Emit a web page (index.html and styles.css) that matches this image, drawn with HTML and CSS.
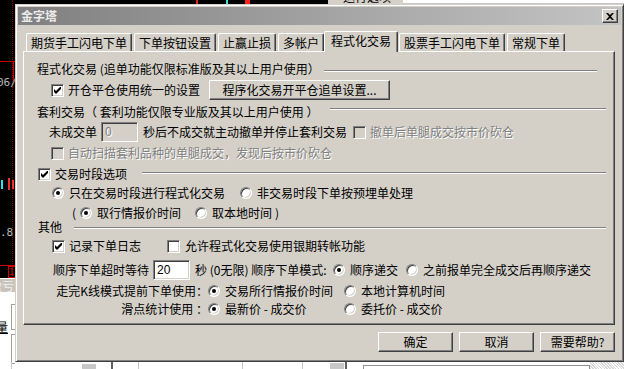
FILE: index.html
```html
<!DOCTYPE html>
<html>
<head>
<meta charset="utf-8">
<link rel="stylesheet" href="styles.css">
</head>
<body>
<div class="bg">
  <div class="bg-top-black"><i class="mk mk-r1"></i><i class="mk mk-c1"></i><i class="mk mk-r2"></i></div>
  <div class="bg-top-tab"><span>运行选项</span></div>
  <div class="bg-top-white"></div>
  <div class="bg-left">
    <i class="dots"></i>
    <i class="redline rl1"></i>
    <i class="redv"></i>
    <span class="lt t06">06/</span>
    <i class="bar cy"></i><i class="bar rd"></i><i class="bar rd2"></i>
    <span class="lt t8">.8</span>
    <i class="redline rl2"></i>
    <span class="rbox">1</span>
  </div>
  <div class="bg-left-gray"><span>盈亏</span></div>
  <div class="bg-left-white"><i class="lbox b1"></i><i class="lbox b2"></i><span class="liang">量</span></div>
  <div class="bg-bottom">
    <i class="gl g1"></i><i class="gblk"></i><i class="dl d1"></i><i class="gl g2"></i><i class="gl g3"></i><i class="gl g4"></i><i class="gblk2"></i><i class="dl d2"></i><i class="bbox"></i><i class="checker"></i>
  </div>
</div>

<div class="dialog">
  <div class="titlebar">
    <span class="title">金字塔</span>
    <span class="close"><svg width="8" height="7" viewBox="0 0 8 7"><path d="M0 0h2l2 2 2-2h2L5 3.5 8 7H6L4 5 2 7H0l3-3.5z" fill="#000"/></svg></span>
  </div>
  <div class="body">
    <div class="tabs">
      <div class="tab">期货手工闪电下单</div>
      <div class="tab">下单按钮设置</div>
      <div class="tab">止赢止损</div>
      <div class="tab">多帐户</div>
      <div class="tab sel">程式化交易</div>
      <div class="tab">股票手工闪电下单</div>
      <div class="tab">常规下单</div>
    </div>
    <div class="panel">
      <div class="row r1"><span>程式化交易 (追单功能仅限标准版及其以上用户使用）</span><i class="etch e1"></i></div>
      <div class="row r2">
        <span class="cb on"><svg width="7" height="7" viewBox="0 0 7 7"><path d="M0 2l2 2 5-5v3L2 7 0 5z" fill="#000"/></svg></span>
        <span class="lab w-r2">开仓平仓使用统一的设置</span>
        <span class="btn bigbtn">程序化交易开平仓追单设置...</span>
      </div>
      <div class="row r3"><span>套利交易（ 套利功能仅限专业版及其以上用户使用 ）</span><i class="etch e2"></i></div>
      <div class="row r4">
        <span class="w-r4a">未成交单</span>
        <span class="field dis">0</span>
        <span class="w-r4b">秒后不成交就主动撤单并停止套利交易</span>
        <span class="cb dis"></span>
        <span class="lab distext">撤单后单腿成交按市价砍仓</span>
      </div>
      <div class="row r5">
        <span class="cb dis"></span>
        <span class="lab distext">自动扫描套利品种的单腿成交，发现后按市价砍仓</span>
      </div>
      <div class="row r6">
        <span class="cb on"><svg width="7" height="7" viewBox="0 0 7 7"><path d="M0 2l2 2 5-5v3L2 7 0 5z" fill="#000"/></svg></span>
        <span class="lab l6">交易时段选项</span><i class="etch e3"></i>
      </div>
      <div class="row r7">
        <span class="opt w-r7"><span class="rb on"></span><span>只在交易时段进行程式化交易</span></span>
        <span class="opt"><span class="rb"></span><span>非交易时段下单按预埋单处理</span></span>
      </div>
      <div class="row r8">
        <span class="paren">(</span>
        <span class="opt w-r8"><span class="rb on"></span><span>取行情报价时间</span></span>
        <span class="opt w-r8b"><span class="rb"></span><span>取本地时间</span></span>
        <span>)</span>
      </div>
      <div class="row r9"><span>其他</span><i class="etch e4"></i></div>
      <div class="row r10">
        <span class="opt w-r10"><span class="cb on"><svg width="7" height="7" viewBox="0 0 7 7"><path d="M0 2l2 2 5-5v3L2 7 0 5z" fill="#000"/></svg></span><span>记录下单日志</span></span>
        <span class="opt"><span class="cb"></span><span>允许程式化交易使用银期转帐功能</span></span>
      </div>
      <div class="row r11">
        <span class="w-r11a">顺序下单超时等待</span>
        <span class="field">20</span>
        <span class="w-r11b">秒 (0无限) 顺序下单模式:</span>
        <span class="opt w-r11c"><span class="rb on"></span><span>顺序递交</span></span>
        <span class="opt"><span class="rb"></span><span>之前报单完全成交后再顺序递交</span></span>
      </div>
      <div class="row r12">
        <span class="klab">走完K线模式提前下单使用：</span>
        <span class="opt w-col"><span class="rb on"></span><span>交易所行情报价时间</span></span>
        <span class="opt"><span class="rb"></span><span>本地计算机时间</span></span>
      </div>
      <div class="row r13">
        <span class="klab">滑点统计使用 ：</span>
        <span class="opt w-col"><span class="rb on"></span><span>最新价 - 成交价</span></span>
        <span class="opt"><span class="rb"></span><span>委托价 - 成交价</span></span>
      </div>
    </div>
    <div class="buttons">
      <span class="btn fbtn">确定</span>
      <span class="btn fbtn">取消</span>
      <span class="btn fbtn">需要帮助?</span>
    </div>
  </div>
</div>
</body>
</html>
```

FILE: styles.css
```css
html, body {
  margin: 0;
  padding: 0;
}
body {
  width: 624px;
  height: 369px;
  overflow: hidden;
  position: relative;
  background: #fff;
  font-family: "Noto Sans CJK SC", "Noto Sans", sans-serif;
  font-size: 12px;
  line-height: 14px;
  color: #000;
}

/* ---------- background application (behind the dialog) ---------- */
.bg { position: absolute; left: 0; top: 0; width: 624px; height: 369px; }
.bg i, .bg span { position: absolute; display: block; }
.bg-top-black { position: absolute; left: 0; top: 0; width: 328px; height: 4px; background: #000; }
.mk { top: 0; height: 4px; width: 2px; }
.mk-r1 { left: 196px; background: #e02020; }
.mk-c1 { left: 226px; background: #40e0e0; }
.mk-r2 { left: 245px; width: 5px; background: #ff2020; }
.bg-top-tab { position: absolute; left: 328px; top: 0; width: 75px; height: 4px; background: #d4d0c8; overflow: hidden; }
.bg-top-tab span { left: 15px; top: -10px; white-space: nowrap; color: #000; }
.bg-top-white { position: absolute; left: 403px; top: 0; width: 221px; height: 3px; background: #fff; border-bottom: 1px solid #c8c8c8; }

.bg-left { position: absolute; left: 0; top: 0; width: 15px; height: 278px; background: #000; overflow: hidden; }
.dots { left: 12px; top: 0; height: 278px; border-left: 1px dotted #900000; }
.redline { left: 0; width: 15px; height: 1px; background: #d00000; }
.rl1 { top: 61px; }
.rl2 { top: 265px; }
.redv { left: 13px; top: 61px; width: 1px; height: 20px; background: #d00000; }
.lt { color: #b8b8b8; font-family: "DejaVu Sans Mono", monospace; font-size: 11px; line-height: 12px; white-space: nowrap; }
.t06 { left: -3px; top: 77px; }
.t8 { left: 0; top: 227px; }
.bar { width: 2px; }
.cy { left: 1px; top: 180px; height: 9px; background: #30e0f0; }
.rd { left: 8px; top: 178px; height: 12px; background: #f03030; }
.rd2 { left: 12px; top: 180px; height: 9px; background: #f03030; }
.rbox { left: 8px; top: 266px; width: 6px; height: 10px; border: 1px solid #d00000; color: #d00000; font-size: 9px; line-height: 10px; }
.bg-left-gray { position: absolute; left: 0; top: 279px; width: 15px; height: 13px; background: #c8c4bc; overflow: hidden; }
.bg-left-gray span { left: -10px; top: 0; line-height: 13px; color: #f0f0f0; white-space: nowrap; }
.bg-left-white { position: absolute; left: 0; top: 292px; width: 15px; height: 77px; background: #fff; }
.lbox { left: 11px; width: 4px; border: 1px solid #a0a0a0; border-right: none; }
.b1 { top: 12px; height: 24px; }
.b2 { top: 42px; height: 28px; }
.liang { left: -4px; top: 28px; font-size: 12px; text-decoration: underline; }

.bg-bottom { position: absolute; left: 15px; top: 362px; width: 609px; height: 7px; background: #fff; }
.gl { top: 0; height: 7px; width: 1px; background: #c8c8c8; }
.g1 { left: -4px; }
.gblk { left: 67px; top: 2px; width: 14px; height: 5px; background: #c8c8c8; }
.dl { top: 0; height: 7px; width: 2px; background: #606060; }
.d1 { left: 96px; }
.g2 { left: 123px; }
.g3 { left: 227px; }
.g4 { left: 287px; }
.gblk2 { left: 315px; top: 1px; width: 14px; height: 6px; background: #c8c8c8; }
.d2 { left: 330px; }
.bbox { left: 348px; top: 3px; width: 225px; height: 4px; border: 1px solid #909090; border-bottom: none; }
.checker { left: 575px; top: 0; width: 34px; height: 7px; background: repeating-linear-gradient(45deg, #d8d8d8 0 1px, #fff 1px 2px); }

/* ---------- dialog ---------- */
.dialog {
  position: absolute;
  left: 15px;
  top: 4px;
  width: 609px;
  height: 358px;
  box-sizing: border-box;
  background: #d4d0c8;
  border: 1px solid;
  border-color: #d4d0c8 #404040 #404040 #d4d0c8;
  box-shadow: inset 1px 1px #fff, inset -1px -1px #808080;
  padding: 2px;
  display: flex;
  flex-direction: column;
}
.titlebar {
  height: 18px;
  flex: none;
  background: linear-gradient(to right, #808080, #c4c4c4);
  display: flex;
  align-items: center;
  justify-content: space-between;
  padding: 0 3px 0 3px;
}
.title {
  color: #ececec;
  font-weight: bold;
  font-size: 12px;
}
.close {
  width: 16px;
  height: 14px;
  box-sizing: border-box;
  background: #d4d0c8;
  border: 1px solid;
  border-color: #fff #404040 #404040 #fff;
  box-shadow: inset -1px -1px #808080;
  display: flex;
  align-items: center;
  justify-content: center;
  padding-right: 1px;
}
.close svg { display: block; }

.body {
  flex: 1;
  padding: 6px 6px 0 5px;
  display: flex;
  flex-direction: column;
}
.tabs {
  height: 20px;
  display: flex;
  align-items: flex-end;
  padding-left: 3px;
  flex: none;
}
.tab {
  height: 18px;
  box-sizing: border-box;
  padding: 1px 4px 0 4px;
  border-top: 1px solid #fff;
  border-left: 1px solid #fff;
  border-right: 1px solid #404040;
  box-shadow: inset -1px 0 #808080;
  border-radius: 2px 2px 0 0;
  margin-right: 2px;
  white-space: nowrap;
  line-height: 16px;
}
.tab.sel {
  height: 21px;
  margin: 0 1px -1px -2px;
  padding: 0 6px 3px 6px;
  background: #d4d0c8;
  position: relative;
  z-index: 1;
  line-height: 17px;
}

.panel {
  height: 274px;
  box-sizing: border-box;
  flex: none;
  border: 1px solid;
  border-color: #fff #404040 #404040 #fff;
  box-shadow: inset -1px -1px #808080;
  padding-top: 6px;
  display: flex;
  flex-direction: column;
}
.row {
  display: flex;
  align-items: center;
  white-space: nowrap;
  flex: none;
}
.r1 { height: 21px; padding-left: 13px; padding-right: 17px; }
.r2 { height: 22px; padding-left: 27px; }
.r3 { height: 22px; padding-left: 13px; padding-right: 8px; }
.r4 { height: 18px; padding-left: 25px; }
.r5 { height: 24px; padding-left: 27px; }
.r6 { height: 18px; padding-left: 14px; padding-right: 8px; }
.r7 { height: 20px; padding-left: 28px; }
.r8 { height: 20px; padding-left: 48px; }
.r9 { height: 8px; padding-left: 14px; padding-right: 8px; }
.r10 { height: 30px; padding-left: 28px; }
.r11 { height: 18px; padding-left: 29px; }
.r12 { height: 24px; padding-left: 28px; }
.r13 { height: 12px; padding-left: 28px; }

.etch {
  flex: 1;
  height: 0;
  border-top: 1px solid #808080;
  border-bottom: 1px solid #fff;
}
.e1 { margin-left: 4px; margin-top: 4px; }
.e2 { margin-left: 12px; margin-top: -6px; }
.e3 { margin-left: 15px; margin-top: -2px; }
.e4 { margin-left: 12px; margin-top: 2px; }

.cb {
  width: 13px;
  height: 13px;
  box-sizing: border-box;
  background: #fff;
  border: 1px solid;
  border-color: #808080 #fff #fff #808080;
  box-shadow: inset 1px 1px #404040, inset -1px -1px #d4d0c8;
  display: flex;
  align-items: center;
  justify-content: center;
  flex: none;
}
.cb.dis { background: #d4d0c8; }
.cb svg { display: block; }
.lab { margin-left: 4px; }
.l6 { margin-left: 4px; }
.w-r2 { width: 141px; }

.rb {
  width: 12px;
  height: 12px;
  box-sizing: border-box;
  border-radius: 50%;
  background: #fff;
  border: 1px solid;
  border-color: #808080 #fff #fff #808080;
  box-shadow: inset 1px 1px #404040, inset -1px -1px #d4d0c8;
  display: flex;
  align-items: center;
  justify-content: center;
  flex: none;
}
.rb.on::after {
  content: "";
  width: 4px;
  height: 4px;
  border-radius: 50%;
  background: #000;
}
.opt {
  display: flex;
  align-items: center;
  gap: 5px;
}
.w-r7 { width: 188px; }
.paren { width: 8px; }
.w-r8 { width: 115px; }
.w-r8b { width: 80px; }
.w-r10 { width: 115px; }
.w-r10 .cb { margin-right: -1px; }
.w-r11a { width: 100px; }
.w-r11b { width: 138px; margin-left: 5px; }
.w-r11c { width: 73px; }
.w-r4a { width: 52px; }
.w-r4b { width: 210px; margin-left: 5px; }
.klab { width: 156px; text-align: right; box-sizing: border-box; }
.w-col { width: 136px; }

.field {
  width: 37px;
  height: 20px;
  box-sizing: border-box;
  background: #fff;
  border: 1px solid;
  border-color: #808080 #fff #fff #808080;
  box-shadow: inset 1px 1px #404040, inset -1px -1px #d4d0c8;
  padding: 2px 0 0 3px;
  line-height: 15px;
  font-family: "Liberation Sans", sans-serif;
  font-size: 12px;
  flex: none;
}
.field.dis {
  background: #d4d0c8;
  color: #808080;
  text-shadow: 1px 1px #fff;
}
.distext {
  color: #808080;
  text-shadow: 1px 1px #fff;
}

.btn {
  box-sizing: border-box;
  height: 20px;
  background: #d4d0c8;
  border: 1px solid;
  border-color: #fff #404040 #404040 #fff;
  box-shadow: inset -1px -1px #808080;
  display: flex;
  align-items: center;
  justify-content: center;
  white-space: nowrap;
}
.bigbtn { width: 181px; padding-bottom: 1px; }
.buttons {
  display: flex;
  justify-content: flex-end;
  gap: 6px;
  margin-top: 7px;
}
.fbtn { width: 75px; }
```
